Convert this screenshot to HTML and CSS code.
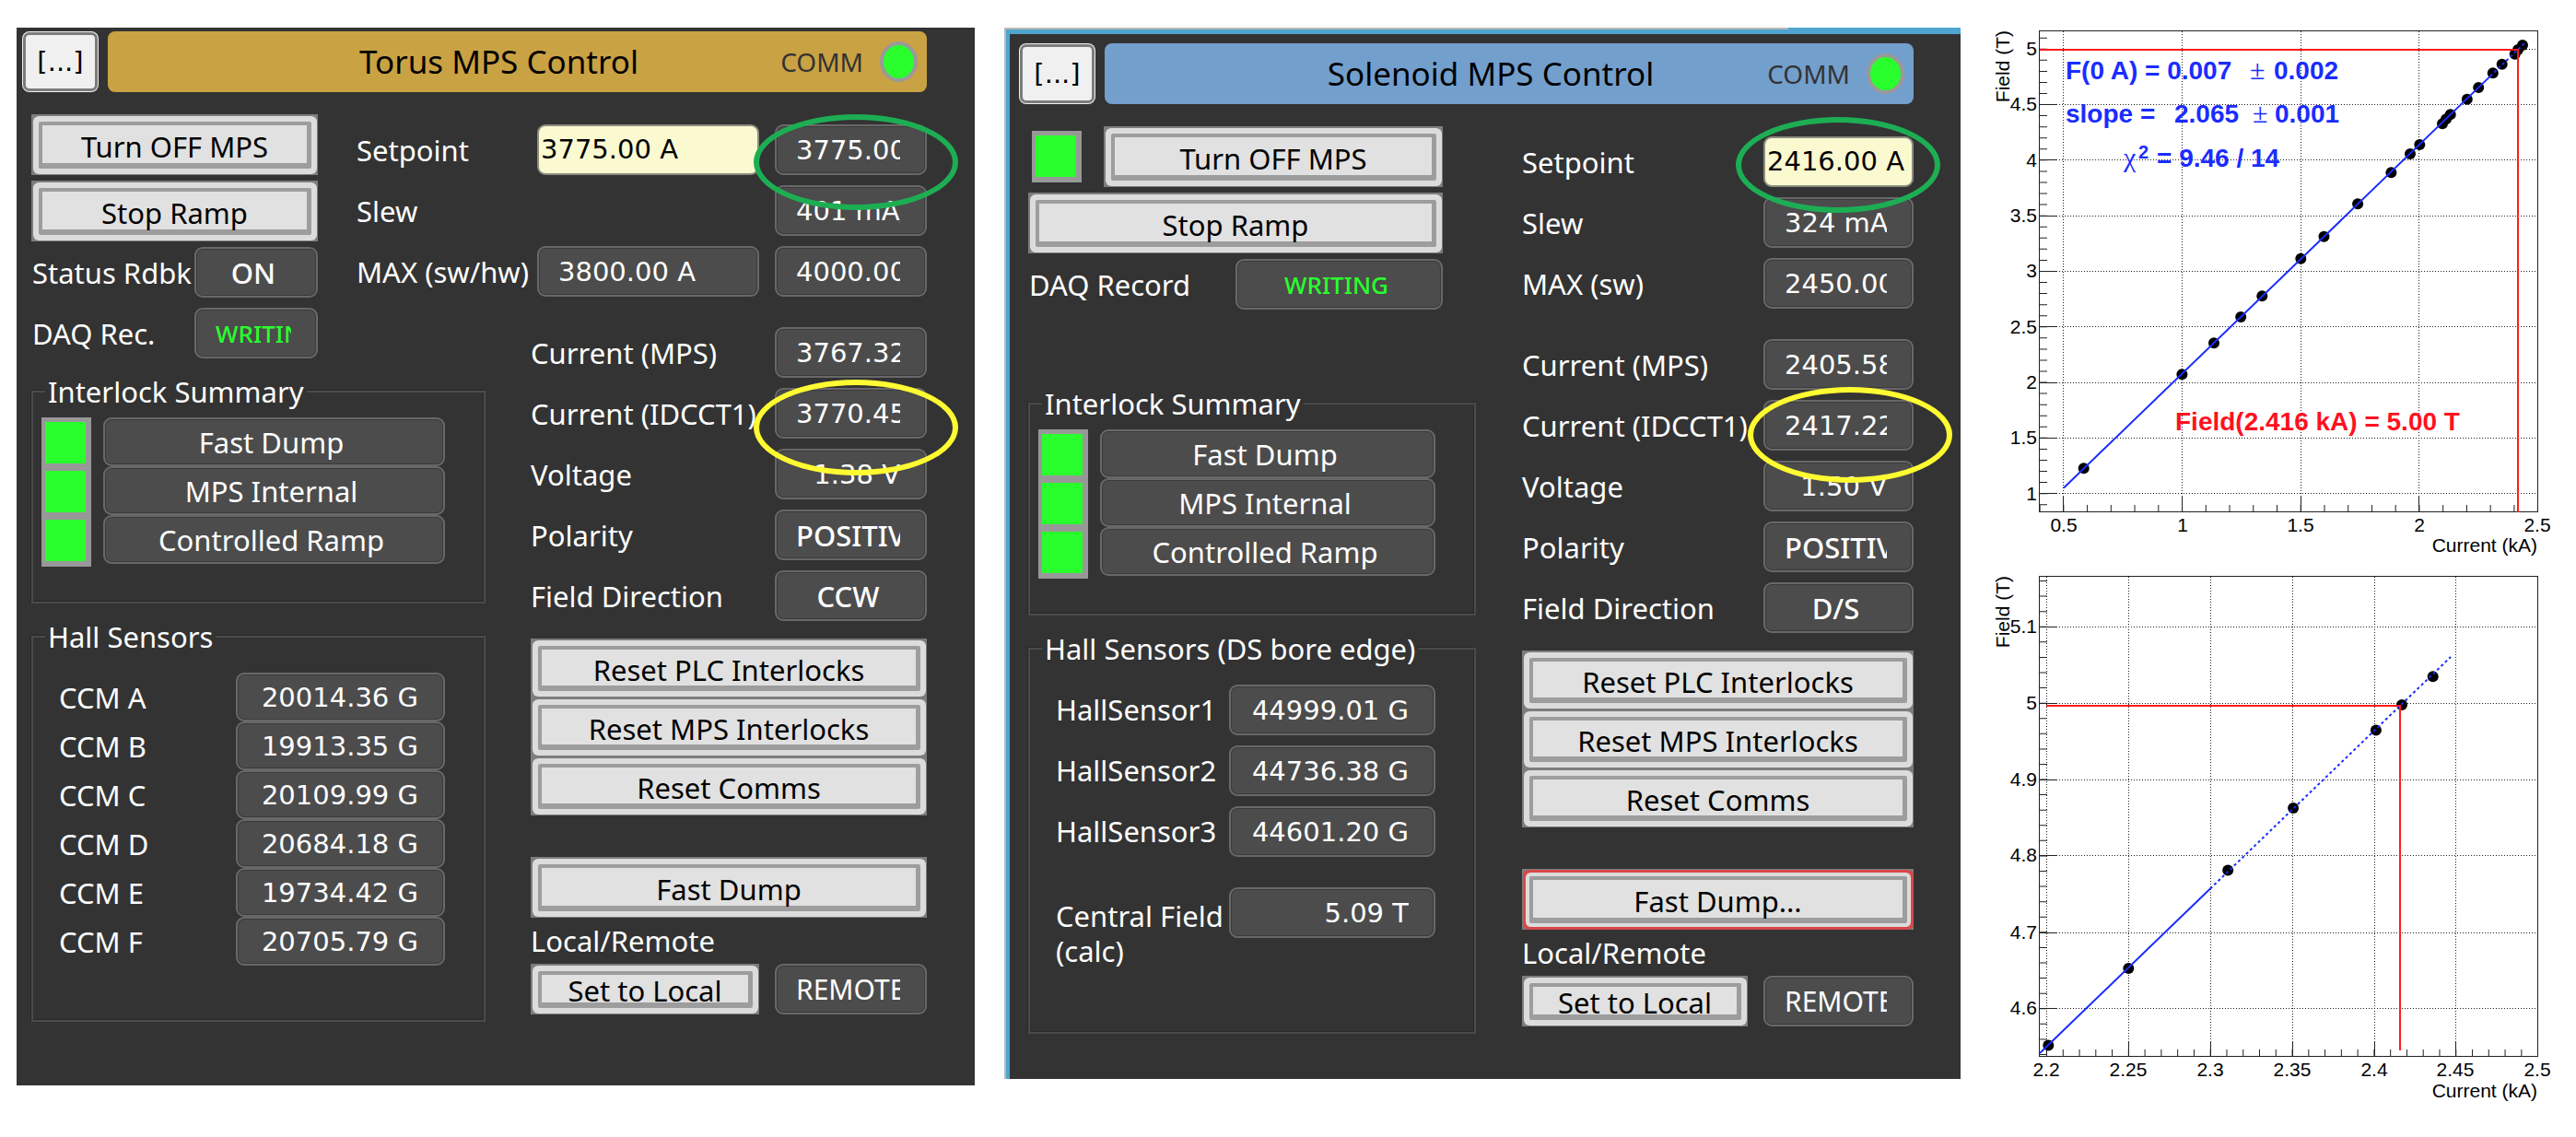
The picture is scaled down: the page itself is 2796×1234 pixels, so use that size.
FILE: index.html
```html
<!DOCTYPE html>
<html lang="en">
<head>
<meta charset="utf-8">
<title>MPS Control</title>
<link rel="stylesheet" href="styles.css">
</head>
<body>
<main class="screen">

  <section class="panel torus">
    <header class="head">
      <button class="menu num" type="button">[...]</button>
      <div class="bar gold">
        <h1 class="title">Torus MPS Control</h1>
        <div class="comm">COMM <span class="lamp"></span></div>
      </div>
    </header>
    <div class="body">
      <div class="actions">
        <button class="btn" type="button"><span>Turn OFF MPS</span></button>
        <button class="btn" type="button"><span>Stop Ramp</span></button>
        <div class="rows">
          <div class="row"><span class="label">Status Rdbk</span><output class="reading mid short"><span>ON</span></output></div>
          <div class="row"><span class="label">DAQ Rec.</span><output class="reading mid short live"><span>WRITING</span></output></div>
        </div>
      </div>

      <div class="rows setpoints">
        <div class="row">
          <label class="label" for="torus-set">Setpoint</label>
          <input class="field num wide" id="torus-set" type="text" value="3775.00 A">
          <output class="reading num"><span>3775.00 A</span><i class="ring green"></i></output>
        </div>
        <div class="row"><span class="label">Slew</span><output class="reading num"><span>401 mA/s</span></output></div>
        <div class="row">
          <span class="label">MAX (sw/hw)</span>
          <output class="reading num wide"><span>3800.00 A</span></output>
          <output class="reading num"><span>4000.00 A</span></output>
        </div>
      </div>

      <div class="groups">
        <fieldset class="group interlocks">
          <legend>Interlock Summary</legend>
          <div class="lock"><i class="led"></i><output class="reading mid"><span>Fast Dump</span></output></div>
          <div class="lock"><i class="led"></i><output class="reading mid"><span>MPS Internal</span></output></div>
          <div class="lock"><i class="led"></i><output class="reading mid"><span>Controlled Ramp</span></output></div>
        </fieldset>
        <fieldset class="group sensors">
          <legend>Hall Sensors</legend>
          <div class="sensor"><span class="label">CCM A</span><output class="reading end num"><span>20014.36 G</span></output></div>
          <div class="sensor"><span class="label">CCM B</span><output class="reading end num"><span>19913.35 G</span></output></div>
          <div class="sensor"><span class="label">CCM C</span><output class="reading end num"><span>20109.99 G</span></output></div>
          <div class="sensor"><span class="label">CCM D</span><output class="reading end num"><span>20684.18 G</span></output></div>
          <div class="sensor"><span class="label">CCM E</span><output class="reading end num"><span>19734.42 G</span></output></div>
          <div class="sensor"><span class="label">CCM F</span><output class="reading end num"><span>20705.79 G</span></output></div>
        </fieldset>
      </div>

      <div class="status">
        <div class="rows">
          <div class="row"><span class="label">Current (MPS)</span><output class="reading num"><span>3767.32 A</span></output></div>
          <div class="row"><span class="label">Current (IDCCT1)</span><output class="reading num"><span>3770.45 A</span><i class="ring yellow"></i></output></div>
          <div class="row"><span class="label">Voltage</span><output class="reading end num"><span>1.38 V</span></output></div>
          <div class="row"><span class="label">Polarity</span><output class="reading"><span>POSITIVE</span></output></div>
          <div class="row"><span class="label">Field Direction</span><output class="reading mid"><span>CCW</span></output></div>
        </div>
        <div class="resets">
          <button class="btn" type="button"><span>Reset PLC Interlocks</span></button>
          <button class="btn" type="button"><span>Reset MPS Interlocks</span></button>
          <button class="btn" type="button"><span>Reset Comms</span></button>
        </div>
        <button class="btn" type="button"><span>Fast Dump</span></button>
        <span class="label remote">Local/Remote</span>
        <div class="row">
          <button class="btn low" type="button"><span>Set to Local</span></button>
          <output class="reading state"><span>REMOTE</span></output>
        </div>
      </div>
    </div>
  </section>

  <section class="panel solenoid">
    <header class="head">
      <button class="menu num" type="button">[...]</button>
      <div class="bar blue">
        <h1 class="title">Solenoid MPS Control</h1>
        <div class="comm">COMM <span class="lamp"></span></div>
      </div>
    </header>
    <div class="body">
      <div class="actions">
        <div class="power"><i class="led"></i><button class="btn" type="button"><span>Turn OFF MPS</span></button></div>
        <button class="btn" type="button"><span>Stop Ramp</span></button>
        <div class="rows">
          <div class="row"><span class="label">DAQ Record</span><output class="reading mid daq live"><span>WRITING</span></output></div>
        </div>
      </div>

      <div class="rows setpoints">
        <div class="row">
          <label class="label" for="solenoid-set">Setpoint</label>
          <div class="fieldbox"><input class="field num" id="solenoid-set" type="text" value="2416.00 A"><i class="ring green"></i></div>
        </div>
        <div class="row"><span class="label">Slew</span><output class="reading num"><span>324 mA/s</span></output></div>
        <div class="row"><span class="label">MAX (sw)</span><output class="reading num"><span>2450.00 A</span></output></div>
      </div>

      <div class="groups">
        <fieldset class="group interlocks">
          <legend>Interlock Summary</legend>
          <div class="lock"><i class="led"></i><output class="reading mid"><span>Fast Dump</span></output></div>
          <div class="lock"><i class="led"></i><output class="reading mid"><span>MPS Internal</span></output></div>
          <div class="lock"><i class="led"></i><output class="reading mid"><span>Controlled Ramp</span></output></div>
        </fieldset>
        <fieldset class="group sensors spaced">
          <legend>Hall Sensors (DS bore edge)</legend>
          <div class="sensor"><span class="label">HallSensor1</span><output class="reading end num"><span>44999.01 G</span></output></div>
          <div class="sensor"><span class="label">HallSensor2</span><output class="reading end num"><span>44736.38 G</span></output></div>
          <div class="sensor"><span class="label">HallSensor3</span><output class="reading end num"><span>44601.20 G</span></output></div>
          <div class="sensor central"><span class="label">Central Field<br>(calc)</span><output class="reading end num"><span>5.09 T</span></output></div>
        </fieldset>
      </div>

      <div class="status">
        <div class="rows">
          <div class="row"><span class="label">Current (MPS)</span><output class="reading num"><span>2405.58 A</span></output></div>
          <div class="row"><span class="label">Current (IDCCT1)</span><output class="reading num"><span>2417.22 A</span><i class="ring yellow"></i></output></div>
          <div class="row"><span class="label">Voltage</span><output class="reading end num"><span>1.50 V</span></output></div>
          <div class="row"><span class="label">Polarity</span><output class="reading"><span>POSITIVE</span></output></div>
          <div class="row"><span class="label">Field Direction</span><output class="reading mid"><span>D/S</span></output></div>
        </div>
        <div class="resets">
          <button class="btn" type="button"><span>Reset PLC Interlocks</span></button>
          <button class="btn" type="button"><span>Reset MPS Interlocks</span></button>
          <button class="btn" type="button"><span>Reset Comms</span></button>
        </div>
        <button class="btn danger" type="button"><span>Fast Dump...</span></button>
        <span class="label remote">Local/Remote</span>
        <div class="row">
          <button class="btn low" type="button"><span>Set to Local</span></button>
          <output class="reading state"><span>REMOTE</span></output>
        </div>
      </div>
    </div>
  </section>

  <div class="charts">
    <svg class="chart" viewBox="4 4 636 590" role="img" aria-label="Field against current, full range">
      <path class="grid" d="M83.500 8V530M212.500 8V530M341.500 8V530M469.500 8V530M58 27.500H598M58 87.500H598M58 147.500H598M58 208.500H598M58 268.500H598M58 328.500H598M58 389.500H598M58 449.500H598M58 509.500H598"/>
      <rect class="frame" x="57.5" y="7.5" width="541" height="522"/>
      <line class="ticks" x1="62" y1="14.7" x2="62" y2="530" stroke-dasharray="1 11.06"/>
      <line class="ticks" x1="57.6" y1="526" x2="598" y2="526" stroke-dasharray="1 24.74"/>
      <path class="major" d="M83.500 530v-17M212.500 530v-17M341.500 530v-17M469.500 530v-17M58 27.500h18M58 87.500h18M58 147.500h18M58 208.500h18M58 268.500h18M58 328.500h18M58 389.500h18M58 449.500h18M58 509.500h18"/>
      <g class="dots">
        <circle cx="582" cy="23" r="6"/><circle cx="577" cy="28" r="6"/><circle cx="573.7" cy="32.7" r="6"/>
        <circle cx="559.7" cy="43.7" r="6"/><circle cx="549.8" cy="53.3" r="6"/><circle cx="534.2" cy="69" r="6"/>
        <circle cx="521.8" cy="81.7" r="6"/><circle cx="503.7" cy="98.3" r="6"/><circle cx="499" cy="103.3" r="6"/>
        <circle cx="495" cy="108.3" r="6"/><circle cx="470.3" cy="131" r="6"/><circle cx="460" cy="141" r="6"/>
        <circle cx="439.4" cy="161.3" r="6"/><circle cx="403.1" cy="195.3" r="6"/><circle cx="366.5" cy="230.7" r="6"/>
        <circle cx="341.3" cy="254.7" r="6"/><circle cx="299.3" cy="295.3" r="6"/><circle cx="276.2" cy="318" r="6"/>
        <circle cx="247" cy="346.3" r="6"/><circle cx="212.4" cy="380.3" r="6"/><circle cx="105.7" cy="482.3" r="6"/>
      </g>
      <path class="fit" d="M84 503.5L547 56.6"/>
      <path class="fit dashed" d="M547 56.6L585 20"/>
      <path class="mark" d="M58 28H577V530"/>
      <g class="tick y">
        <text x="55" y="34">5</text><text x="55" y="94">4.5</text><text x="55" y="155">4</text><text x="55" y="215">3.5</text>
        <text x="55" y="275">3</text><text x="55" y="336">2.5</text><text x="55" y="396">2</text><text x="55" y="456">1.5</text><text x="55" y="517">1</text>
      </g>
      <g class="tick x">
        <text x="84" y="551">0.5</text><text x="213" y="551">1</text><text x="341" y="551">1.5</text><text x="470" y="551">2</text><text x="598" y="551">2.5</text>
      </g>
      <text class="axis" x="598" y="573">Current (kA)</text>
      <text class="axis" transform="translate(25 7) rotate(-90)">Field (T)</text>
      <g class="note">
        <text x="86" y="60">F(0 A) = 0.007</text><text class="sym" x="286" y="60">±</text><text x="312" y="60">0.002</text>
        <text x="86" y="107">slope =</text><text x="204" y="107">2.065</text><text class="sym" x="289" y="107">±</text><text x="313" y="107">0.001</text>
        <text class="sym" x="149" y="155">χ</text><text class="sup" x="165" y="146">2</text><text x="185" y="155">= 9.46 / 14</text>
      </g>
      <text class="note red" x="205" y="441">Field(2.416 kA) = 5.00 T</text>
    </svg>

    <svg class="chart" viewBox="4 0 636 590" role="img" aria-label="Field against current, high range">
      <path class="grid" d="M65.500 6V527M154.500 6V527M243.500 6V527M332.500 6V527M421.500 6V527M509.500 6V527M58 60.500H598M58 143.500H598M58 226.500H598M58 308.500H598M58 392.500H598M58 474.500H598"/>
      <rect class="frame" x="57.5" y="5.5" width="541" height="521"/>
      <line class="ticks" x1="62" y1="10" x2="62" y2="527" stroke-dasharray="1 15.58"/>
      <line class="ticks" x1="65" y1="523" x2="598" y2="523" stroke-dasharray="1 16.77"/>
      <path class="major" d="M65.500 527v-16M154.500 527v-16M243.500 527v-16M332.500 527v-16M421.500 527v-16M509.500 527v-16M58 60.500h18M58 143.500h18M58 226.500h18M58 308.500h18M58 392.500h18M58 474.500h18"/>
      <g class="dots">
        <circle cx="484.7" cy="114.3" r="6"/><circle cx="451" cy="145" r="6"/><circle cx="422.9" cy="172.5" r="6"/>
        <circle cx="333.1" cy="257" r="6"/><circle cx="262.2" cy="324.5" r="6"/><circle cx="154.3" cy="430.9" r="6"/><circle cx="67.3" cy="514.6" r="6"/>
      </g>
      <path class="fit" d="M58 523L243 344.5"/>
      <path class="fit dashed" d="M243 344.5L504 93"/>
      <path class="mark" d="M65 146H449V520"/>
      <g class="tick y">
        <text x="55" y="67">5.1</text><text x="55" y="150">5</text><text x="55" y="233">4.9</text><text x="55" y="315">4.8</text><text x="55" y="399">4.7</text><text x="55" y="481">4.6</text>
      </g>
      <g class="tick x">
        <text x="65" y="548">2.2</text><text x="154" y="548">2.25</text><text x="243" y="548">2.3</text><text x="332" y="548">2.35</text><text x="421" y="548">2.4</text><text x="509" y="548">2.45</text><text x="598" y="548">2.5</text>
      </g>
      <text class="axis" x="598" y="571">Current (kA)</text>
      <text class="axis" transform="translate(25 5) rotate(-90)">Field (T)</text>
    </svg>
  </div>
</main>
</body>
</html>
```
FILE: styles.css
```css
* { box-sizing: border-box; }

body {
  margin: 0;
  background: #fff;
  color: #fff;
  font: 31px/38px "Noto Sans", sans-serif;
}

button, input { font: inherit; }

.screen {
  display: grid;
  grid-template-columns: 1040fr 1038fr 636fr;
  gap: 32px;
  align-items: start;
  padding: 30px 0 0 18px;
}

.panel { background: #333; }

.torus { padding: 4px 52px 69px 6px; }

.solenoid {
  padding: 17px 51px 49px 16px;
  background:
    linear-gradient(90deg, #b9b9b9 82%, #4fa5cf 82%) 0 0 / 100% 2px no-repeat,
    linear-gradient(#b9b9b9, #b9b9b9) 0 0 / 2px 100% no-repeat,
    linear-gradient(#4fa5cf, #4fa5cf) 0 0 / 100% 7px no-repeat,
    linear-gradient(#4fa5cf, #4fa5cf) 0 0 / 6px 100% no-repeat,
    #333;
}

/* header */
.head { display: flex; gap: 10px; height: 66px; }

.menu {
  display: flex;
  align-items: center;
  justify-content: center;
  width: 83px;
  padding: 0;
  border: 0;
  border-radius: 8px;
  outline: 3px solid #7c7c7c;
  outline-offset: -4px;
  color: #000;
  background: #f0f0f0;
}

.bar {
  flex: 1;
  display: grid;
  align-items: center;
  border-radius: 8px;
  color: #000;
}
.gold { background: #c9a243; }
.blue { background: #739fcd; }

.title {
  grid-area: 1 / 1;
  margin: 0;
  padding-right: 40px;
  text-align: center;
  font-size: 35px;
  font-weight: 400;
}

.comm {
  grid-area: 1 / 1;
  justify-self: end;
  display: flex;
  align-items: center;
  gap: 18px;
  padding-right: 10px;
  color: #333;
  font-size: 28px;
}

.lamp {
  width: 41px;
  height: 44px;
  border: 4px solid #999;
  border-radius: 50%;
  background: #2aff2e;
}

/* body grid: the upper blocks and the lower blocks break at different heights */
.body {
  display: grid;
  grid-template-rows: 231px 51px auto;
  margin: 24px 0 0 10px;
}
.torus .body { grid-template-columns: 311fr 42fr 140fr 49fr 430fr; }
.solenoid .body { grid-template-columns: 450fr 36fr 50fr 425fr; }
.actions { grid-area: 1 / 1 / 3 / 2; }
.setpoints { grid-row: 1; padding-top: 11px; }
.groups { grid-row: 3; }
.status { grid-row: 2 / 4; }
.torus .setpoints { grid-column: 3 / 6; }
.torus .groups { grid-column: 1 / 4; }
.torus .status { grid-column: 5; }
.solenoid .setpoints { grid-column: 4; }
.solenoid .groups { grid-column: 1 / 3; }
.solenoid .status { grid-column: 4; }

.actions, .status { display: flex; flex-direction: column; }
.actions { gap: 6px; }

.power { display: flex; align-items: center; gap: 24px; padding-left: 4px; }
.power .btn { flex: 1; }

.rows { display: flex; flex-direction: column; gap: 11px; }
.row { display: flex; align-items: center; gap: 17px; height: 55px; }
.actions .row { gap: 0; }
.label { flex: 1; min-width: 0; white-space: nowrap; }
.actions .label { padding-left: 1px; }

/* value boxes */
.reading {
  position: relative;
  display: flex;
  align-items: center;
  flex: none;
  width: 165px;
  height: 55px;
  padding: 0 27px 0 21px;
  border: 2px solid #686868;
  border-radius: 9px;
  background: #4c4c4c;
  box-shadow: inset 0 0 0 1px #3a3a3a;
}
.reading span { flex: 1; overflow: hidden; white-space: nowrap; }
.row .reading { font-weight: 500; }
.row .state { font-size: 30px; font-weight: 400; }
.mid { text-align: center; }
.end { text-align: right; }
.short { width: 134px; }
.daq { width: 225px; }
.row .live { color: #2aff2e; font-size: 26px; }
.short.live { text-align: left; }
.wide { width: 241px; }
.solenoid .status .reading, .solenoid .setpoints .reading { width: 163px; }

.num { font-family: "DejaVu Sans", sans-serif; font-size: 29px; }

.field {
  flex: none;
  height: 55px;
  padding: 0 2px 2px;
  border: 2px solid #8d8d80;
  border-radius: 9px;
  background: #fbf9d0;
  color: #000;
}
.fieldbox { position: relative; width: 163px; height: 55px; }
.fieldbox .field { width: 100%; }

/* hand-drawn rings over the key values */
.ring {
  position: absolute;
  z-index: 1;
  width: 222px;
  height: 104px;
  border: 6px solid;
  border-radius: 50%;
  pointer-events: none;
}
.green { border-color: #1dae54; left: -25px; top: -13px; }
.yellow { border-color: #fffb32; left: -25px; top: -11px; }
.solenoid .green { left: -30px; top: -21px; }
.solenoid .yellow { left: -19px; top: -16px; }

/* push buttons */
.btn {
  display: flex;
  height: 66px;
  padding: 8px 7px 7px 8px;
  border: 0;
  border-radius: 0;
  background: #7d7d7d;
  color: #000;
}
.btn span {
  flex: 1;
  display: flex;
  align-items: center;
  justify-content: center;
  height: 100%;
  padding-top: 4px;
  border: solid #9d9d9d;
  border-width: 4px 5px 6px 4px;
  border-radius: 2px;
  background: #e1e1e1;
  box-shadow: 0 0 0 6px #dcdcdc;
  white-space: nowrap;
}
.resets { display: flex; flex-direction: column; margin: 19px 0 45px; }
.resets .btn { height: 64px; }
.low { flex: 1; height: 55px; }
.danger span { box-shadow: 0 0 0 4px #dcdcdc, 0 0 0 7px #d9484a; }
.remote { flex: none; line-height: 50px; }

/* groups */
.groups { display: flex; flex-direction: column; gap: 17px; }
.group {
  margin: 0;
  min-width: 0;
  padding: 9px 42px 0 9px;
  border: 2px solid #4b4b4b;
  box-shadow: -1px -1px 0 #282828, inset -1px -1px 0 #282828;
}
.group legend { margin-left: 4px; padding: 0 3px; background: #333; }
.interlocks { height: 249px; }
.sensors { height: 437px; padding-top: 20px; }
.lock { display: flex; gap: 13px; height: 53px; }
.group .reading { height: 53px; }
.lock .reading { flex: 1; }
.led {
  flex: none;
  width: 54px;
  height: 56px;
  border: solid #989898;
  border-width: 5px 6px 6px 4px;
  background: #2aff2e;
}
.sensor { display: flex; align-items: center; height: 53px; padding-left: 19px; }
.sensor .reading { width: 227px; }
.sensors .sensor { font-weight: 400; }
.spaced .sensor { height: 66px; align-items: flex-start; }
.group.spaced .reading { width: 224px; height: 55px; }
.spaced .label { line-height: 55px; }
.spaced .central { margin-top: 22px; }
.spaced .central .label { padding-top: 12px; line-height: 38px; }

/* charts */
.charts { display: flex; flex-direction: column; }
.chart { display: block; width: 100%; }
.chart path, .chart line, .frame { fill: none; }
.grid { stroke: #222; stroke-width: 1; stroke-dasharray: 1 2; }
.frame, .major { stroke: #222; stroke-width: 1; }
.ticks { stroke: #222; stroke-width: 8; }
.dots { fill: #000; }
.fit { stroke: #1a2cff; stroke-width: 2; }
.dashed { stroke-dasharray: 3 3; }
.mark { stroke: #ff1a1f; stroke-width: 2; }
.chart text { font-family: "Liberation Sans", sans-serif; }
.tick, .axis { fill: #000; font-size: 21px; }
.tick.y, .axis { text-anchor: end; }
.tick.x { text-anchor: middle; }
.note { fill: #1a2cff; font-size: 28px; font-weight: 700; }
.chart .sym { font-family: "Liberation Serif", serif; font-weight: 400; font-size: 30px; }
.sup { font-size: 20px; }
.red { fill: #ff1020; }
```
